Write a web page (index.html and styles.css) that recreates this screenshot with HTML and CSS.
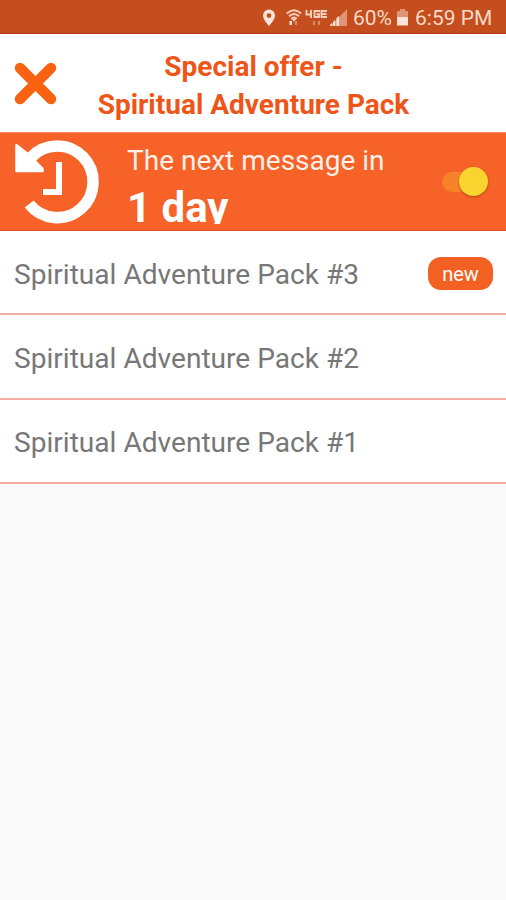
FILE: index.html
```html
<!DOCTYPE html>
<html lang="en">
<head>
<meta charset="utf-8">
<title>Special offer</title>
<link rel="stylesheet" href="styles.css">
</head>
<body>
<div class="status">
  <svg class="pin" width="14" height="18" viewBox="0 0 14 18"><path fill-rule="evenodd" d="M7 .5a6 6 0 0 0-6 6c0 4.200 6 10.500 6 10.500S13 10.700 13 6.500A6 6 0 0 0 7 .5zm0 3.700a2.400 2.400 0 1 1 0 4.800 2.400 2.400 0 0 1 0-4.800z"/></svg>
  <svg class="wifi" width="16" height="18" viewBox="0 0 16 18"><path class="line" d="M.8 4.500Q8-2 15.200 4.500M3 7.300Q8 2.800 13 7.300M5.200 9.800Q8 7 10.800 9.800"/><path d="M5.500 9.500h5L8 12.500z"/><path d="M3.500 12h2.500v4H3.500z"/><path class="dim" d="M9 12h2v4H9z"/></svg>
  <svg class="lte" width="23" height="18" viewBox="0 0 23 18"><path class="line" d="M1.500 1v4.500H7M6 1v8M15 2H9.500v6H14V5.200h-2.500M22 2h-5.500v6H22M16.500 5h5"/><path class="dim" d="M8 12h2v4H8zM13 12h2v4h-2z"/></svg>
  <svg class="signal" width="19" height="18" viewBox="0 0 19 18"><path class="faint" d="M18 0v17H1z"/><path d="M1 17v-1l2-2v3zM4 17v-4l2-2v6zM7.500 17V9l2.500-2v10z"/></svg>
  <span class="percent">60%</span>
  <svg class="battery" width="13" height="18" viewBox="0 0 13 18"><path class="faint" d="M4 0h5v2h3v6H1V2h3z"/><path d="M1 8h11v8.500H1z"/></svg>
  <span class="time">6:59 PM</span>
</div>
<header class="header">
  <svg class="close" width="44" height="44" viewBox="0 0 44 44"><path d="M6 6l31 31M37 6L6 37"/></svg>
  <h1 class="title">Special offer -<br>Spiritual Adventure Pack</h1>
</header>
<section class="banner">
  <svg class="history" width="88" height="86" viewBox="0 0 88 86"><path class="ring" d="M18 18.500A35.800 35.800 0 1 1 16.200 65"/><path class="arrow" d="M3.500 5.500L15 14.500 30 29.500V32.500H3.500Q3 32.500 3 32V6z"/><path class="hands" d="M46 23v30H30"/></svg>
  <div class="message">
    <div class="caption">The next message in</div>
    <div class="days">1 day</div>
  </div>
  <div class="toggle"><span class="knob"></span></div>
</section>
<main class="list">
  <div class="row"><span class="name">Spiritual Adventure Pack #3</span><span class="badge">new</span></div>
  <div class="row"><span class="name">Spiritual Adventure Pack #2</span></div>
  <div class="row"><span class="name">Spiritual Adventure Pack #1</span></div>
</main>
</body>
</html>
```
FILE: styles.css
```css
* { box-sizing: border-box; }
body { margin: 0; min-height: 900px; background: #fafafa; font-family: Roboto, sans-serif; overflow: hidden; }
svg { display: block; flex: none; }
.status { height: 34px; display: flex; align-items: center; padding: 2px 0 0 262px; background: #c44e1d; border-bottom: 1px solid #b92f09; color: #fbd9c9; fill: #fbe4da; font-size: 21px; white-space: nowrap; }
.status .line { fill: none; stroke: #f7cfbd; stroke-width: 1.900; }
.status .dim { fill: #d98f70; }
.status .faint { fill: #df9575; }
.wifi { margin-left: 10px; }
.lte { margin-left: 3px; }
.signal { margin-left: 1px; }
.percent { margin-left: 5px; width: 42px; }
.battery { margin-left: 1px; }
.time { margin-left: 6px; }
.header { height: 98px; display: flex; align-items: center; padding-left: 14px; background: #fff; }
.close { margin-top: 1px; fill: none; stroke: #f96210; stroke-width: 10.500; stroke-linecap: round; }
.title { margin: 5px 0 0 39px; width: 313px; text-align: center; color: #ee5619; font-size: 28px; line-height: 38px; font-weight: 700; white-space: nowrap; }
.banner { height: 99px; display: flex; align-items: center; padding: 0 18px 0 13px; background: #f66228; border-top: 1px solid #f9885b; border-bottom: 1px solid #dc4e18; color: #fff; }
.ring { fill: none; stroke: #fff; stroke-width: 11.500; }
.arrow { fill: #fff; stroke: #fff; stroke-width: 1.500; stroke-linejoin: round; }
.hands { fill: none; stroke: #fff; stroke-width: 6; }
.message { margin-left: 26px; height: 84px; overflow: hidden; white-space: nowrap; }
.caption { font-size: 28px; line-height: 33px; margin-top: 4px; color: #fff0e8; }
.days { font-size: 42px; line-height: 50px; margin-top: 6px; font-weight: 700; }
.toggle { margin-left: auto; width: 46px; height: 20px; border-radius: 10px; background: #f8822a; display: flex; align-items: center; justify-content: flex-end; }
.knob { width: 29px; height: 29px; border-radius: 50%; background: #f9d42f; box-shadow: 0 1px 2px rgba(100, 40, 0, .55); }
.row { display: flex; align-items: center; justify-content: space-between; height: 84.400px; padding: 2px 13px 0 14px; background: #fff; border-bottom: 2px solid #f4ada0; }
.name { margin-top: 2px; color: #777; font-size: 28.100px; }
.badge { width: 65px; height: 33px; border-radius: 13px; background: #f26022; color: #fff; font-size: 20px; line-height: 34px; text-align: center; }
```
